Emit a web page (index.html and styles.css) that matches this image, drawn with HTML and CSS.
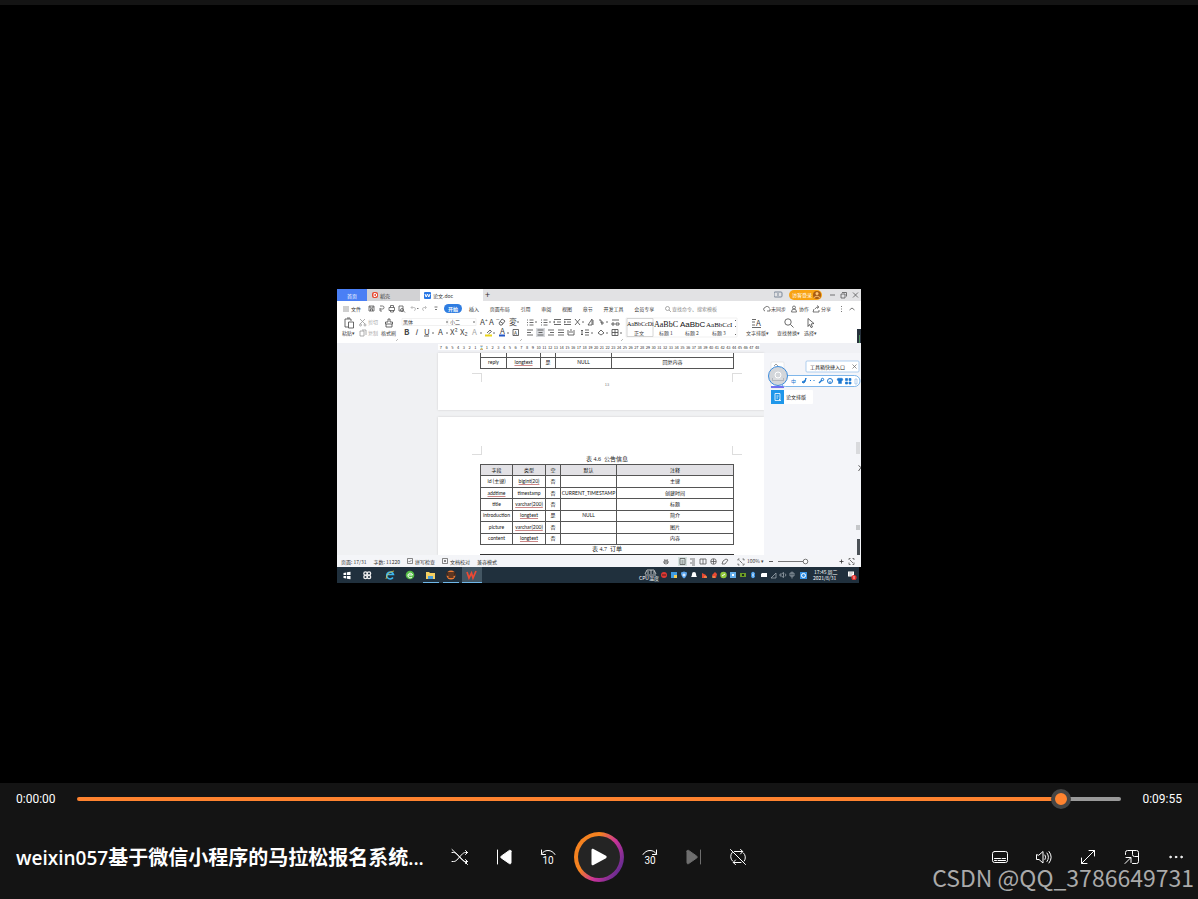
FILE: index.html
```html
<!DOCTYPE html>
<html lang="zh-CN">
<head>
<meta charset="utf-8">
<meta name="viewport" content="width=device-width, initial-scale=1">
<title>weixin057基于微信小程序的马拉松报名系统</title>
<link rel="stylesheet" href="styles.css">
</head>
<body>
<div class="player">
  <main class="stage">
    <section class="video" aria-label="视频画面">
      <div class="tabs">
        <span class="tab home">首页</span>
        <span class="tab docer"><svg width="6" height="6" viewBox="0 0 6 6"><rect width="6" height="6" rx="2" fill="#e8492f"/><path d="M2 1.5h1.2a1.5 1.5 0 0 1 0 3H2z" fill="none" stroke="#fff"/></svg>稻壳</span>
        <span class="tab current"><svg width="7" height="7" viewBox="0 0 7 7"><rect width="7" height="7" rx="1" fill="#2878e6"/><path d="M1 2l1.2 3 1.3-3 1.3 3L6 2" fill="none" stroke="#fff"/></svg>论文.doc</span>
        <span class="plus">+</span>
        <svg class="win" width="85" height="12" viewBox="774 289 85 12" fill="none" stroke="#555">
          <rect x="774" y="292" width="8" height="5" rx="1" stroke="#7b8798"/><path d="M778 293v3" stroke="#7b8798"/>
          <rect x="789" y="290" width="33" height="10" rx="5" fill="#f9a312" stroke="none"/><text x="792" y="297" class="tiny pale">访客登录</text>
          <circle cx="817" cy="295" r="4" fill="#a85c16" stroke="none"/><circle cx="817" cy="293.5" r="1.5" fill="#ffc675" stroke="none"/><path d="M814 297.500q3-3 6 0" stroke="#ffc675"/>
          <path d="M830 295h5M841 294h4v4h-4zM842 292.500h4.500v4M853 292.500l5 5m0-5l-5 5" stroke-width=".8"/>
        </svg>
      </div>
      <div class="menu">
        <svg width="6" height="6" viewBox="0 0 6 6"><path d="M0 1h6M0 3h6M0 5h6" stroke="#777" stroke-width=".7"/></svg>
        <span class="file">文件</span>
        <svg class="quick" width="72" height="12" viewBox="369 303 72 12" fill="none" stroke="#555" stroke-width=".8">
          <path d="M370 306h5v5h-5zM371 306v2h3v-2M371.500 311v-2h2v2M381 306h2.500a1.500 1.500 0 0 1 0 3H381M381 308v3h2M390 307.500h5.500v3H390zM391.500 307.500v-2h3v2M391.500 310v2h3v-2M400 306h4v5h-4zM403 308.500a1.500 1.500 0 1 1 0 3 1.500 1.500 0 0 1 0-3M404.500 311l1.500 1.500"/>
          <path d="M412 307.500h3a1.500 1.500 0 0 1 0 3M413.500 306l-1.500 1.500 1.500 1.500M427 307.500h-2a1.500 1.500 0 0 0 0 3M426 306l1.500 1.500-1.500 1.500" stroke="#b5b5b5"/><path d="M418 308.500h1.500M435.500 307h3M436 309l1 1 1-1"/>
        </svg>
        <span class="pill">开始</span>
        <div class="menu-items"><span>插入</span><span>页面布局</span><span>引用</span><span>审阅</span><span>视图</span><span>章节</span><span>开发工具</span><span>会员专享</span>
        <span class="search"><svg width="6" height="6" viewBox="0 0 6 6"><circle cx="2.500" cy="2.500" r="2" fill="none" stroke="#888" stroke-width=".7"/><path d="M4 4l2 2" stroke="#888" stroke-width=".7"/></svg>查找命令、搜索模板</span></div>
        <svg class="share" width="94" height="12" viewBox="763 303 94 12" fill="none" stroke="#555" stroke-width=".8">
          <path d="M765 311a1.800 1.800 0 0 1 0-3.500 2.500 2.500 0 0 1 4.500 1M767 311h3v-2"/><text x="771" y="311" class="tiny">未同步</text>
          <circle cx="794" cy="307.500" r="1.500"/><path d="M791.500 312q0-3 2.500-3t2.500 3z"/><text x="799" y="311" class="tiny">协作</text>
          <path d="M814 309l-1 3h6v-2M815 309q1-2 3-2M817 305.500l2 1.500-2 1.500"/><text x="821" y="311" class="tiny">分享</text>
          <path d="M841.500 306v1M841.500 308.500v1M841.500 311v1M849.500 310l2.500-2 2.500 2"/>
        </svg>
      </div>
      <svg class="ribbon" viewBox="337 316 524 27" fill="none" stroke="#444" stroke-width=".8" role="img" aria-label="工具栏">
        <path d="M345 319h6v2M345 319v8h3M347 318h3M348.500 322h5v6h-5z"/><text x="342" y="335" class="tiny">粘贴▾</text>
        <g stroke="#999"><path d="M360 319l5 5m0-5l-5 5"/><circle cx="360.500" cy="325" r="1"/><circle cx="365" cy="325" r="1"/><path d="M360 331h4v5h-4zM362 330h4v5"/></g><text x="368" y="324" class="tiny dim">剪切</text><text x="368" y="335" class="tiny dim">复制</text>
        <path d="M388 319h2v3h2.500v2h-7v-2h2.500zM386 324v3h6v-3"/><text x="381" y="335" class="tiny">格式刷</text>
        <path d="M402 318.500h45v7h-45zM448 318.500h28v7h-28z" stroke="#eee"/><text x="403" y="324" class="tiny">黑体</text><text x="450" y="324" class="tiny">小二</text><path d="M446 322h2M473 322h2"/>
        <text x="480" y="325" class="letter">A⁺</text><text x="489" y="325" class="letter">Aˉ</text><path d="M499 323l3-4 3 2-3 4h-2z M500 321.500l3 2"/><text x="509" y="325" class="letter">変</text><path d="M517 322h2"/>
        <text x="404" y="335" class="letter heavy">B</text><text x="415" y="335" class="letter it">I</text><text x="424" y="335" class="letter">U</text><path d="M424 336h5M432 333h2M446 333h2"/><text x="438" y="335" class="letter">A</text><text x="450" y="335" class="letter">X²</text><text x="460" y="335" class="letter">X₂</text><text x="472" y="335" class="letter dim">A</text><path d="M480 333h2M493 333h2M507 333h2"/>
        <path d="M487 333l3-3 1.500 1.500-3 2.500"/><path d="M485 335.500h7" stroke="#ead51c" stroke-width="2"/><text x="500" y="334" class="letter">A</text><path d="M499 335.500h6" stroke="#2457c5" stroke-width="2"/><path d="M513 329.500h5.500v6H513z"/><text x="514" y="335" class="tiny">A</text>
        <g><path d="M527 320h1M527 322.500h1M527 325h1M529.500 320h4M529.500 322.500h4M529.500 325h4M535 322h2M541 320h1M541 322.500h1M541 325h1M543.500 320h4M543.500 322.500h4M543.500 325h4M549 322h2M554 319.500h7M557 322h4M554 324.500h7M555 321l-1.500 1 1.500 1M564 319.500h7M567 322h4M564 324.500h7M564 321l1.500 1-1.500 1M575 319l5 6m0-6l-5 6M582 322h2M588 325l4-6v6zM593 320v5M599 320h2v3h3M602 321v4M606 322h2M612 320h7M612 323h2v2h-2zM616 323h3v2h-3z"/></g>
        <rect x="536" y="328" width="9" height="9" fill="#d8dade" stroke="none"/>
        <path d="M527 330h6M527 332.500h4M527 335h6M537.500 330h6M538.500 332.500h4M537.500 335h6M548 330h6M550 332.500h4M548 335h6M558 330h6M558 332.500h6M558 335h6M568 330v5M574 330v5M568 335h6M569 332h4M570 330h2M582 330v5M581 331l1-1 1 1M581 334l1 1 1-1M585 330h4M585 332.500h4M585 335h4M591 333h2M598 333l3-3 3 3-3 2zM606 333h2M612 329.500h6v6h-6zM615 329.500v6M612 332.500h6M620 333h2"/>
        <path d="M626 318h111v19H626z" fill="#fff" stroke="#eee"/><path d="M627 318.500h26v18h-26z" stroke="#ccc"/>
        <text x="627" y="326" class="sample small">AaBbCcDi</text><text x="654" y="327" class="sample">AaBbC</text><text x="680" y="327" class="sample sans">AaBbC</text><text x="706" y="327" class="sample mid">AaBbCcI</text>
        <text x="634" y="335" class="tiny">正文</text><text x="659" y="335" class="tiny">标题 1</text><text x="685" y="335" class="tiny">标题 2</text><text x="712" y="335" class="tiny">标题 3</text><path d="M735.500 320v1M735.500 326v1M735.500 334v1"/>
        <text x="756" y="326" class="letter">A</text><path d="M752 319.500h4M752 322h3M752 325h3M752 327.500h9"/><text x="746" y="335" class="tiny">文字排版▾</text>
        <circle cx="788" cy="322" r="3.200"/><path d="M790.500 324.500l3 3"/><text x="777" y="335" class="tiny">查找替换▾</text><path d="M808 318.500l6 5-3 .5 1.500 3-1.500.5-1.500-3-1.500 2z"/><text x="804" y="335" class="tiny">选择▾</text>
        <path d="M396 341l2-2M520 341l2-2M621 341l2-2" stroke="#aaa"/><path d="M857 329h4v14h-4z" fill="#27313c" stroke="none"/><path d="M859.500 335v8" stroke="#55a466"/>
      </svg>
      <div class="ruler">
        <div class="scale"><i>7</i><i>6</i><i>5</i><i>4</i><i>3</i><i>2</i><i>1</i><i class="mark">⌛</i><i>1</i><i>2</i><i>3</i><i>4</i><i>5</i><i>6</i><i>7</i><i>8</i><i>9</i><i>10</i><i>11</i><i>12</i><i>13</i><i>14</i><i>15</i><i>16</i><i>17</i><i>18</i><i>19</i><i>20</i><i>21</i><i>22</i><i>23</i><i>24</i><i>25</i><i>26</i><i>27</i><i>28</i><i>29</i><i>30</i><i>31</i><i>32</i><i>33</i><i>34</i><i>35</i><i>36</i><i>37</i><i>38</i><i>39</i><i>40</i><i>41</i><i>42</i><i>43</i><i>44</i><i>45</i><i>46</i><i>47</i><i>48</i></div>
      </div>
      <div class="workspace">
        <div class="pages">
          <div class="page first">
            <table class="grid reply">
              <colgroup><col class="c26"><col class="c34"><col class="c15"><col class="c56"><col></colgroup>
              <tr class="cut"><td></td><td></td><td></td><td></td><td></td></tr>
              <tr><td>reply</td><td><u>longtext</u></td><td>是</td><td>NULL</td><td>回复内容</td></tr>
            </table>
            <div class="corners"><span class="bl"></span><span class="br"></span></div>
            <div class="folio">13</div>
          </div>
          <div class="page second">
            <div class="corners"><span class="tl"></span><span class="tr"></span></div>
            <table class="grid notice">
              <caption>表 4.6&nbsp; 公告信息</caption>
              <colgroup><col class="c32"><col class="c33"><col class="c15"><col class="c56"><col></colgroup>
              <tr><th>字段</th><th>类型</th><th>空</th><th>默认</th><th>注释</th></tr>
              <tr><td>id (主键)</td><td><u>bigint(20)</u></td><td>否</td><td></td><td>主键</td></tr>
              <tr><td><u>addtime</u></td><td>timestamp</td><td>否</td><td>CURRENT_TIMESTAMP</td><td>创建时间</td></tr>
              <tr><td>title</td><td><u>varchar(200)</u></td><td>否</td><td></td><td>标题</td></tr>
              <tr><td>introduction</td><td><u>longtext</u></td><td>是</td><td>NULL</td><td>简介</td></tr>
              <tr><td>picture</td><td><u>varchar(200)</u></td><td>否</td><td></td><td>图片</td></tr>
              <tr><td>content</td><td><u>longtext</u></td><td>否</td><td></td><td>内容</td></tr>
            </table>
            <div class="next">表 4.7&nbsp; 订单</div>
            <div class="nextrow"></div>
          </div>
        </div>
        <svg class="side" width="97" height="202" viewBox="764 353 97 202" fill="none" stroke="#1d78d2">
          <rect x="771" y="362" width="13" height="26" rx="1" fill="#fff" stroke="#ddd" stroke-width=".6"/><path d="M774 366l2-2 2 2" stroke="#777" stroke-width=".7"/><path d="M771 386h13v2h-13z" fill="#7271f0" stroke="none"/>
          <rect x="806" y="361" width="53" height="11" rx="1" fill="#fff" stroke="#8fbce8" stroke-width=".7"/><text x="810" y="368.500" class="tiny dark">工具箱快捷入口</text><path d="M852.500 364.500l4 4m0-4l-4 4" stroke="#666" stroke-width=".7"/>
          <rect x="780" y="375.500" width="80" height="11" rx="5.500" fill="#fff" stroke="#5fa5e5" stroke-width=".8"/>
          <circle cx="778" cy="376" r="9.500" fill="#d3d6da" stroke="#3b8bdc"/><path d="M772 378h12v3h-12z" fill="#b3b7bd" stroke="none"/><circle cx="778" cy="375" r="3" stroke="#fff"/><path d="M773 379h10" stroke="#fff"/>
          <text x="791" y="383" class="tiny blue">中</text><path d="M806 378q0 3-4 4 3 3 4-4z" fill="#1d78d2"/><path d="M810.500 380v1M814 380v1"/><path d="M819 383l3-3" stroke-width="1.500"/><circle cx="822.500" cy="379.500" r="1.200"/><circle cx="830" cy="381" r="2.500"/><path d="M829 382h2"/>
          <path d="M837 379l2-1 1 .5 1-.5 2 1-1 2-.5-.5v3h-3v-3l-.5.5z" fill="#1d78d2" stroke-width=".5"/><path d="M845.500 378.500h2v2h-2zM849 378.500h2v2h-2zM845.500 382h2v2h-2zM849 382h2v2h-2z" fill="#1d78d2" stroke-width=".7"/><path d="M855 379h2v5h-2z" stroke="#8db9e8" stroke-width=".7"/>
          <rect x="771" y="390" width="42" height="14" rx="1" fill="#fff" stroke="none"/><path d="M771 390h13v14h-13z" fill="#1f97ea" stroke="none"/><path d="M775 393.500h5v7h-5zM776.500 396h2M776.500 398h1.500M779 399l2 2" stroke="#fff" stroke-width=".8"/><text x="786" y="399" class="tiny dark">论文排版</text>
          <path d="M856 442h4v12h-4z" fill="#d9dadd" stroke="none"/><path d="M858.500 465.500l2.500 2-2.500 3.500" stroke="#333" stroke-width=".8"/><path d="M856 525h4v5h-4z" fill="#c5c7ca" stroke="none"/><path d="M857 539h3v16h-3z" fill="#4b5157" stroke="none"/>
        </svg>
      </div>
      <div class="status">
        <span>页面: 17/31</span><span>字数: 11220</span><span class="check"><svg width="6" height="6" viewBox="0 0 6 6" fill="none" stroke="#555" stroke-width=".7"><path d="M.5.5h5v5h-5zM1.500 3l1 1 2-2"/></svg>拼写检查</span><span class="check"><svg width="6" height="6" viewBox="0 0 6 6" fill="none" stroke="#555" stroke-width=".7"><path d="M.5.5h5v5h-5zM2 2l2 2M4 2l-2 2"/></svg>文档校对</span><span class="dark">兼容模式</span>
        <svg class="view" width="196" height="12" viewBox="661 555 196 12" fill="none" stroke="#555" stroke-width=".8">
          <circle cx="666" cy="562" r="2"/><path d="M663 562h6M664 559l4 5M668 559l-4 5" stroke-width=".5"/><rect x="678" y="557" width="9" height="9" fill="#d5e1df" stroke="none"/><path d="M680 558.500h5v6h-5zM681.500 561h2M681.500 563h2M690 559h5M692 561h3M690 563h5M692 565h3M700 559h6v5h-6zM703 559v5"/><circle cx="713.500" cy="561.500" r="2.800"/><path d="M711 561.500h5M713.500 559v5M722 564l1-3 3-2 2 1-3 4zM738 559h1.500M738 559v1.500M744 559v1.500M744 559h-1.500M738 565v-1.500M738 565h1.500M744 565h-1.500M744 565v-1.500M739.500 560.500l3 3"/>
          <text x="747" y="563" class="tiny">100% ▾</text><path d="M769 561.500h4M839.500 561.500h4M841.500 559.500v4" stroke="#333"/><path d="M778 561.500h30"/><circle cx="805.500" cy="561.500" r="2.300" fill="#fff"/><path d="M849 560v-1.500h1.500M852.500 558.500h1.500v1.500M849 562.500v2h1.500M852.500 564.500h1.500v-2M850 560l3 3"/>
        </svg>
      </div>
      <svg class="taskbar" viewBox="337 567 524 16" fill="none" role="img" aria-label="任务栏">
        <path d="M337 567h524v16H337z" fill="#20303d"/><path d="M462 567h20v16h-20z" fill="#435663"/>
        <path d="M343.500 573l2.700-.5v2.500h-2.700zM347 572.300l3.500-.5v3.200H347zM343.500 576h2.700v2.500l-2.700-.5zM347 576h3.500v3.200l-3.500-.5z" fill="#fff"/>
        <g stroke="#eee" stroke-width="1.300"><circle cx="365.500" cy="573.500" r="1.700"/><circle cx="369" cy="573.500" r="1.700"/><circle cx="365.500" cy="577" r="1.700"/><circle cx="369" cy="577" r="1.700"/></g>
        <path d="M393 577.500a3.500 3.500 0 1 1 .5-3h-6" stroke="#3cb7ee" stroke-width="1.500"/><path d="M386 579q1-7 8-8" stroke="#f2d13c" stroke-width=".7"/>
        <circle cx="410" cy="575" r="4.300" fill="#54bd45"/><path d="M412 577a2.300 2.300 0 1 1 .5-2h-4" stroke="#fff" stroke-width="1"/>
        <path d="M426 572h3l1 1h5v6h-9z" fill="#f4cf62"/><path d="M428 576h5v3h-5z" fill="#4b9ed6"/>
        <circle cx="451" cy="575" r="4.500" fill="#e97832"/><path d="M447 573h8v2h-8zM448.500 577h5" stroke="#30221e" stroke-width="1.300"/>
        <path d="M467 572l2 6 2.500-5 1.500 5 3-7" stroke="#ed4933" stroke-width="1.700"/>
        <path d="M423 582.500h16M443 582.500h16M462 582.500h20" stroke="#70b7e8"/>
        <path d="M645 574l2-4h7l2 4M648 571v3M651 570v4M654 571v3M645 575h11" stroke="#ddd" stroke-width=".8"/><text x="639" y="580" class="tiny pale">CPU温度</text>
        <circle cx="664" cy="575" r="3" fill="#df3934"/><path d="M662 575h4" stroke="#541a19"/><path d="M671 572h6v6h-6z" fill="#3f9ce2"/><path d="M674 575h3v3h-3z" fill="#f4cd53"/><path d="M681 572.500l3-1 3 1q0 4-3 6-3-2-3-6z" fill="#5aa5ee"/><path d="M682.500 575h3M684 573.500v3" stroke="#fff"/>
        <path d="M691 577q1-1 1-3a2 2 0 0 1 4 0q0 2 1 3zM693 578h2" fill="#fff"/><path d="M702 573l4 2 1 3h-5zM712 575l3-3 2 2-1 4h-3z" fill="#e84a32"/><path d="M704 577h3M712 577h3" stroke="#f7b15a"/><circle cx="723.500" cy="575" r="3.200" fill="#91ca3c"/><path d="M722 576l3-2" stroke="#fff"/>
        <path d="M730 572h6v6h-6z" fill="#65aeea"/><path d="M732 574h2v2h-2z" fill="#fff"/><path d="M740 573h6v4h-6z" fill="#6d9c27"/><path d="M742 574h2v2h-2z" fill="#1b281d"/><ellipse cx="753" cy="575" rx="2" ry="3.300" fill="#298be4"/><path d="M752 573.500l2 3-1 1v-5l1 1-2 3" stroke="#fff" stroke-width=".5"/>
        <path d="M760 573h1M762 573h5v4h-6v-3" fill="#fff"/><path d="M771 578l5-5v5zM780 574h1.500l2-1.500v5l-2-1.500H780zM785 573.500l1 1.500-1 1.500M790 573h4v3h-4zM792 571.500v7" stroke="#aeb6bd" stroke-width=".7"/><path d="M800 572h7v7h-7z" fill="#3692e5"/><circle cx="803.500" cy="575.500" r="2" stroke="#fff"/>
        <text x="814" y="573.500" class="tiny pale">17:45 周二</text><text x="813" y="580" class="tiny pale">2021/8/31</text><path d="M848 571.500h6v5h-6z" fill="#fff"/><path d="M849 573h4M849 575h3" stroke="#777" stroke-width=".6"/><circle cx="854" cy="577.500" r="2.600" fill="#e52e2a"/><path d="M854 576v3" stroke="#fff" stroke-width=".7"/>
        <path d="M859 567h2v16h-2z" fill="#000"/>
      </svg>
    </section>
  </main>
  <footer class="controls">
    <div class="timeline">
      <span class="time">0:00:00</span>
      <input class="seek" type="range" min="0" max="1000" value="951" aria-label="播放进度">
      <span class="time end">0:09:55</span>
    </div>
    <div class="bar">
      <h1 class="title"><span class="latin">weixin057</span>基于微信小程序的马拉松报名系统<span class="latin">...</span></h1>
      <div class="transport">
        <button class="btn" aria-label="随机播放：关"><svg viewBox="0 0 20 20"><path d="M2 5.500h1.500c2 0 3 1 4.300 2.500l3.700 4.200c1.200 1.300 2.300 2.300 4.300 2.300H17.500M2 14.500h1.500c2 0 3-1 4.300-2.500l3.700-4.200c1.200-1.300 2.300-2.300 4.300-2.300H17.500M15.500 3.500L17.500 5.500 15.500 7.500M15.500 12.500l2 2-2 2M2 2.500L17.500 17.500"/></svg></button>
        <button class="btn" aria-label="上一个"><svg viewBox="0 0 20 20"><path d="M3.500 3v14"/><path class="solid" d="M17 4.200v11.600c0 .9-.9 1.300-1.600.8l-8.200-5.700c-.6-.4-.6-1.300 0-1.700l8.200-5.800c.7-.5 1.600 0 1.600.8z"/></svg></button>
        <button class="btn" aria-label="后退 10 秒"><svg viewBox="0 0 20 20"><path d="M3.500 3v4.500H7.500M3.500 7C5 4.800 7.200 3.500 10 3.500s5.500 1.500 7 4"/><text x="10" y="17" text-anchor="middle">10</text></svg></button>
        <button class="play" aria-label="播放"><svg viewBox="0 0 24 24"><path d="M3 3.700v16.600c0 1.300 1.300 2 2.400 1.400l15-8.300c1.100-.6 1.100-2.200 0-2.800l-15-8.300C4.300 1.700 3 2.400 3 3.700z"/></svg></button>
        <button class="btn" aria-label="前进 30 秒"><svg viewBox="0 0 20 20"><path d="M16.500 3v4.500H12.500M16.500 7C15 4.800 12.800 3.500 10 3.500S4.500 5 3 7.500"/><text x="10" y="17" text-anchor="middle">30</text></svg></button>
        <button class="btn" aria-label="下一个" disabled><svg viewBox="0 0 20 20"><path d="M16.500 3v14"/><path class="solid" d="M3 4.200v11.600c0 .9.900 1.300 1.600.8l8.200-5.700c.6-.4.600-1.300 0-1.700L4.600 3.400C3.900 2.900 3 3.400 3 4.200z"/></svg></button>
        <button class="btn" aria-label="循环：关"><svg viewBox="0 0 20 20"><path d="M6.500 4.500h8M12.500 2.500L14.800 4.500 12.500 7M15.500 6a6 6 0 0 1 .8 8M13 15.500H5.500M7.500 13L5.200 15.500 7.500 17.500M4.500 14a6 6 0 0 1-.3-8.500M2.500 2.500l15 15"/></svg></button>
      </div>
      <div class="tools">
        <button class="btn" aria-label="字幕"><svg viewBox="0 0 20 20"><rect x="2.500" y="4.500" width="15" height="11" rx="2"/><path d="M4.500 11.500h6M12 11.500h3.500M4.500 13.500h2M8 13.500h7.500"/></svg></button>
        <button class="btn" aria-label="音量"><svg viewBox="0 0 20 20"><path d="M2.500 8v4.500h2.500l4 3.500V4.500L5 8zM11 8q1.500 2.200 0 4.500M13 6q3 4.200 0 8.500M15 4.500q4.500 5.700 0 11.500"/></svg></button>
        <button class="btn" aria-label="全屏"><svg viewBox="0 0 20 20"><path d="M3.500 16.500l13-13M11 3.500h5.500V9M3.500 11v5.500H9"/></svg></button>
        <button class="btn" aria-label="迷你播放器"><svg viewBox="0 0 20 20"><path d="M3.500 7.500v-2a2 2 0 0 1 2-2h9a2 2 0 0 1 2 2v9a2 2 0 0 1-2 2h-4M10.500 3.500v4a2 2 0 0 0 2 2h4M3 16.500l5.500-5.500M4 10.500h5v5"/></svg></button>
        <button class="btn" aria-label="更多"><svg viewBox="0 0 20 20"><g class="solid"><circle cx="4.500" cy="10" r=".8"/><circle cx="10" cy="10" r=".8"/><circle cx="15.500" cy="10" r=".8"/></g></svg></button>
      </div>
    </div>
    <div class="watermark">CSDN @QQ_3786649731</div>
  </footer>
</div>
</body>
</html>
```

FILE: styles.css
```css
* { box-sizing: border-box; }
body { margin: 0; background: #000; color: #fff; font-family: "Open Sans", "Noto Sans CJK SC", sans-serif; }
.player { min-height: 100vh; display: flex; flex-direction: column; border-top: 5px solid #141414; }
.stage { flex: 1; display: flex; align-items: center; justify-content: center; padding-top: 84px; }

.video { width: 524px; display: flex; flex-direction: column; overflow: hidden; background: #fff; color: #333; font: 5px/1 "Noto Sans CJK SC", sans-serif; white-space: nowrap; }
.video svg { flex: none; }
.tiny { font: 5px "Noto Sans CJK SC", sans-serif; fill: #444; stroke: none; }
.letter { font: 8px "Noto Sans CJK SC", sans-serif; fill: #444; stroke: none; }
.heavy { font-weight: 700; }
.it { font-style: italic; }
.sample { font: 8px "Liberation Serif", serif; fill: #111; stroke: none; }
.sample.small { font-size: 6px; }
.sample.mid { font-size: 7px; }
.sample.sans { font-family: "Liberation Sans", sans-serif; }
.tiny.dim, .letter.dim { fill: #aaa; }
.tiny.pale { fill: #fff; }
.tiny.dark { fill: #222; }
.tiny.blue { fill: #1d78d2; }

.tabs { height: 12px; display: flex; align-items: stretch; background: #e2e2e4; }
.tab { display: flex; align-items: center; gap: 2px; }
.home { width: 30px; justify-content: center; background: #4a7ff5; color: #fff; }
.docer { width: 53px; padding-left: 5px; background: #d2d2d4; }
.current { width: 63px; padding-left: 4px; background: #fff; }
.plus { padding-left: 2px; font-size: 9px; line-height: 12px; }
.win { margin-left: auto; margin-right: 2px; }
.menu { height: 15px; padding: 0 4px 0 6px; display: flex; align-items: center; gap: 10px; }
.file { margin-left: -8px; }
.quick { margin: 0 -6px 0 -3px; }
.pill { padding: 2px 4px; border-radius: 5px; background: #2f7de1; color: #fff; font-weight: 700; margin-right: -3px; }
.menu-items { flex: 1; display: flex; justify-content: space-between; align-items: center; padding-right: 36px; }
.search { display: flex; gap: 1px; color: #888; }
.ribbon { display: block; width: 100%; }
.ruler { height: 10px; padding: 1px 101px; background: #f0f1f5; }
.scale { display: flex; height: 6px; background: #fff; }
.scale i { flex: 1 1 0; width: 0; display: flex; justify-content: center; font: 4px/6px "Noto Sans CJK SC", sans-serif; }

.workspace { display: flex; height: 202px; background: #f0f1f3; }
.pages { flex: 1; padding-left: 101px; display: flex; flex-direction: column; gap: 7px; }
.side { background: #f4f5f9; }
.page { background: #fff; padding: 0 30px 0 42px; box-shadow: 0 0 2px #ccc; }
.first { height: 57px; }
.second { flex: 1; padding-top: 29px; overflow: hidden; }
.grid { width: 100%; table-layout: fixed; border-collapse: collapse; font: 5px/9px Lato, "Noto Sans CJK SC", sans-serif; color: #111; }
.grid td, .grid th { padding: 0; border: 1px solid #555; text-align: center; font-weight: 400; height: 11px; line-height: 9px; overflow: visible; }
.grid th { background: #e2e1e5; }
.grid u { text-decoration: underline #c88; }
.grid .cut td { height: 4px; border-top: 0; }
.notice { height: 81px; }
.c15 { width: 15px; }
.c26 { width: 26px; }
.c32 { width: 32px; }
.c33 { width: 33px; }
.c34 { width: 34px; }
.c56 { width: 56px; }
caption, .next { font: 6px/9px "Liberation Serif", "Noto Sans CJK SC", serif; color: #222; text-align: center; }
.corners { display: flex; justify-content: space-between; margin: 0 -8px; }
.corners span { width: 10px; height: 9px; border: 0 solid #ddd; }
.corners .bl { border-top-width: 1px; border-right-width: 1px; }
.corners .br { border-top-width: 1px; border-left-width: 1px; }
.corners .tl { border-bottom-width: 1px; border-right-width: 1px; }
.corners .tr { border-bottom-width: 1px; border-left-width: 1px; }
.first .corners { margin-top: 4px; }
.folio { text-align: center; font-size: 4px; color: #777; }
.nextrow { height: 2px; border: 1px solid #333; border-bottom: 0; }
.status { height: 12px; display: flex; align-items: center; gap: 7px; padding: 0 4px; background: #f4f5f8; }
.check { display: flex; align-items: center; gap: 2px; }
.view { margin-left: auto; }
.taskbar { display: block; width: 100%; }

.controls { position: relative; height: 116px; background: #141414; }
.timeline { height: 32px; display: flex; align-items: center; padding: 0 16px; }
.time { width: 61px; font: 12px/16px Roboto, sans-serif; }
.time.end { text-align: right; }
.seek { flex: 1; min-width: 0; height: 20px; margin: 0; appearance: none; background: none; }
.seek::-webkit-slider-runnable-track { height: 4px; border-radius: 2px; background: linear-gradient(to right, #ff832f 94%, #999 94%); }
.seek::-webkit-slider-thumb { appearance: none; width: 20px; height: 20px; margin-top: -8px; border: 4px solid #454545; border-radius: 50%; background: #ff832f; }
.bar { display: grid; grid-template-columns: 1fr auto 1fr; align-items: center; height: 84px; }
.title { margin: 0; padding-left: 16px; min-width: 0; overflow: hidden; white-space: nowrap; font: 700 20px/28px "Noto Sans CJK SC", sans-serif; }
.latin { font: 600 19px/28px "Open Sans", sans-serif; }
.transport, .tools { display: flex; align-items: center; }
.tools { justify-content: flex-end; }
.btn { width: 44px; height: 44px; padding: 0; border: 0; background: none; color: #fff; display: grid; place-items: center; }
.btn:disabled { color: #6e6e6e; }
.btn svg { width: 20px; height: 20px; fill: none; stroke: currentColor; stroke-width: 1; stroke-linecap: round; stroke-linejoin: round; }
.btn text { font: 10px Roboto, sans-serif; fill: currentColor; stroke: none; }
.btn .solid { fill: currentColor; }
.play { width: 50px; height: 50px; margin: 0 4px; padding: 0; display: grid; place-items: center; border: 4px solid transparent; border-radius: 50%; background: linear-gradient(#242424, #242424) padding-box, linear-gradient(120deg, #f58220 35%, #c8329a 60%, #6b2c91 85%) border-box; }
.play svg { width: 20px; height: 20px; fill: #fff; }
.watermark { position: absolute; right: 4px; bottom: 6px; font: 23px/32px "Noto Sans CJK SC", sans-serif; color: #aaa; white-space: nowrap; }
```
